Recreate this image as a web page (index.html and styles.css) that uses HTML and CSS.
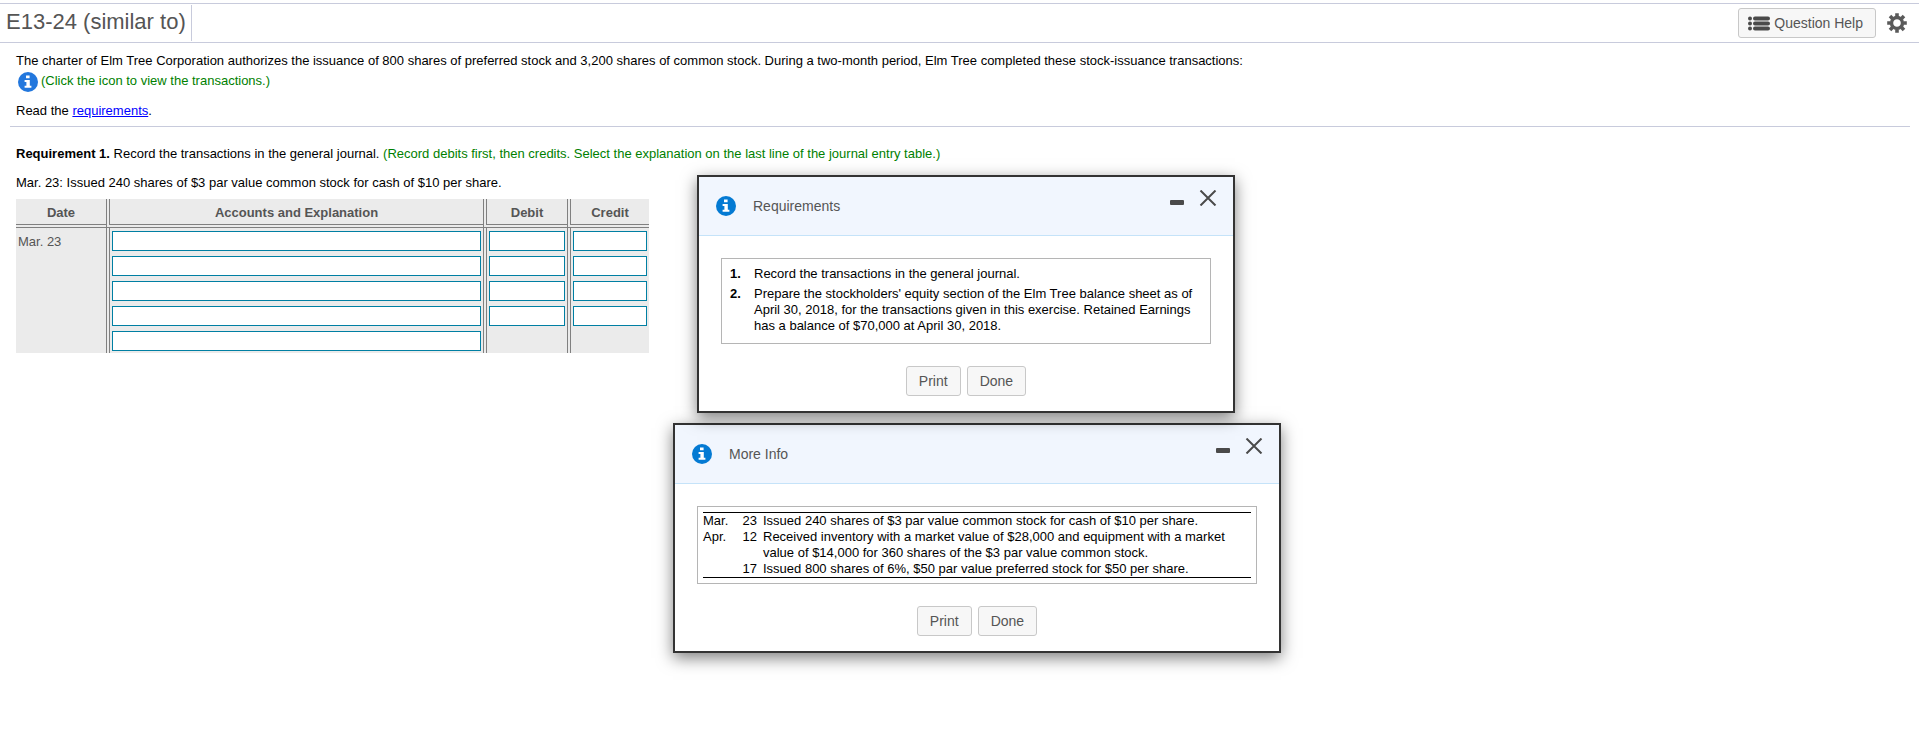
FILE: index.html
```html
<!DOCTYPE html>
<html lang="en">
<head>
    <meta charset="UTF-8">
    <meta name="viewport" content="width=device-width, initial-scale=1.0">
    <title>E13-24 (similar to)</title>
    <link rel="stylesheet" href="styles.css">
</head>
<body>
    <svg class="defs" width="0" height="0" aria-hidden="true">
        <symbol id="info" viewBox="0 0 20 20">
            <circle cx="10" cy="10" r="10" fill="currentColor"/>
            <path fill="#fff" d="M8 3.4h3.6v2.8H8zM6.6 8h5.2v5.8h1.6v2H6.6v-2h1.8V10H6.6z"/>
        </symbol>
        <symbol id="minus" viewBox="0 0 14 5">
            <rect width="14" height="5" rx="1" fill="currentColor"/>
        </symbol>
        <symbol id="close" viewBox="0 0 18 16">
            <path d="M1.5 .5l15 15M16.5 .5l-15 15" stroke="currentColor" stroke-width="2" fill="none"/>
        </symbol>
    </svg>

    <header class="top-bar">
        <h1 class="title">E13-24 (similar to)</h1>
        <div class="tools">
            <button class="btn help" type="button">
                <svg width="22" height="15" viewBox="0 0 22 15" fill="#4a4a4a" aria-hidden="true">
                    <circle cx="2" cy="2.5" r="2"/><circle cx="2" cy="7.5" r="2"/><circle cx="2" cy="12.5" r="2"/>
                    <rect x="5" y=".5" width="17" height="4" rx="2"/><rect x="5" y="5.5" width="17" height="4" rx="2"/><rect x="5" y="10.5" width="17" height="4" rx="2"/>
                </svg>
                Question Help
            </button>
            <button class="icon-btn" type="button" aria-label="Settings">
                <svg width="20" height="20" viewBox="-10 -10 20 20" fill="none" stroke="#5a5a5a">
                    <circle r="5.5" stroke-width="3.4"/>
                    <path stroke-width="3.6" d="M0-6.5V-9.8M0 6.5V9.8M-6.5 0H-9.8M6.5 0H9.8M-4.6-4.6L-7-7M4.6-4.6L7-7M-4.6 4.6L-7 7M4.6 4.6L7 7"/>
                </svg>
            </button>
        </div>
    </header>

    <section class="problem">
        <p>The charter of Elm Tree Corporation authorizes the issuance of 800 shares of preferred stock and 3,200 shares of common stock. During a two-month period, Elm Tree completed these stock-issuance transactions:</p>
        <p class="hint info-line">
            <button class="icon-btn info-btn" type="button" aria-label="View the transactions"><svg width="20" height="20"><use href="#info"/></svg></button>
            (Click the icon to view the transactions.)
        </p>
        <p class="read">Read the <a href="#requirements">requirements</a>.</p>
    </section>

    <main class="answer">
        <p><strong>Requirement 1.</strong> Record the transactions in the general journal. <span class="hint">(Record debits first, then credits. Select the explanation on the last line of the journal entry table.)</span></p>
        <p class="entry">Mar. 23: Issued 240 shares of $3 par value common stock for cash of $10 per share.</p>
        <table class="journal">
            <thead>
                <tr><th class="date">Date</th><th class="gap"></th><th class="account">Accounts and Explanation</th><th class="gap"></th><th class="debit">Debit</th><th class="gap"></th><th class="credit">Credit</th></tr>
                <tr class="rule"><td></td><td class="gap"></td><td></td><td class="gap"></td><td></td><td class="gap"></td><td></td></tr>
            </thead>
            <tbody>
                <tr><td class="day">Mar. 23</td><td class="gap"></td><td><input type="text" aria-label="Account 1"></td><td class="gap"></td><td><input type="text" aria-label="Debit 1"></td><td class="gap"></td><td><input type="text" aria-label="Credit 1"></td></tr>
                <tr><td></td><td class="gap"></td><td><input type="text" aria-label="Account 2"></td><td class="gap"></td><td><input type="text" aria-label="Debit 2"></td><td class="gap"></td><td><input type="text" aria-label="Credit 2"></td></tr>
                <tr><td></td><td class="gap"></td><td><input type="text" aria-label="Account 3"></td><td class="gap"></td><td><input type="text" aria-label="Debit 3"></td><td class="gap"></td><td><input type="text" aria-label="Credit 3"></td></tr>
                <tr><td></td><td class="gap"></td><td><input type="text" aria-label="Account 4"></td><td class="gap"></td><td><input type="text" aria-label="Debit 4"></td><td class="gap"></td><td><input type="text" aria-label="Credit 4"></td></tr>
                <tr><td></td><td class="gap"></td><td><input type="text" aria-label="Explanation"></td><td class="gap"></td><td></td><td class="gap"></td><td></td></tr>
            </tbody>
        </table>
    </main>

    <div class="dialog more-info" role="dialog" aria-labelledby="info-title">
        <div class="dialog-head">
            <svg class="dialog-icon" width="20" height="20" aria-hidden="true"><use href="#info"/></svg>
            <h2 id="info-title">More Info</h2>
            <div class="dialog-tools">
                <button class="icon-btn" type="button" aria-label="Minimize"><svg class="min" width="14" height="5"><use href="#minus"/></svg></button>
                <button class="icon-btn" type="button" aria-label="Close"><svg width="18" height="16"><use href="#close"/></svg></button>
            </div>
        </div>
        <div class="dialog-body">
            <div class="box box-table">
                <table class="transactions">
                    <tr><td class="month">Mar.</td><td class="num">23</td><td>Issued 240 shares of $3 par value common stock for cash of $10 per share.</td></tr>
                    <tr><td>Apr.</td><td class="num">12</td><td>Received inventory with a market value of $28,000 and equipment with a market<br>value of $14,000 for 360 shares of the $3 par value common stock.</td></tr>
                    <tr><td></td><td class="num">17</td><td>Issued 800 shares of 6%, $50 par value preferred stock for $50 per share.</td></tr>
                </table>
            </div>
            <div class="actions">
                <button class="btn" type="button">Print</button>
                <button class="btn" type="button">Done</button>
            </div>
        </div>
    </div>

    <div class="dialog requirements" id="requirements" role="dialog" aria-labelledby="req-title">
        <div class="dialog-head">
            <svg class="dialog-icon" width="20" height="20" aria-hidden="true"><use href="#info"/></svg>
            <h2 id="req-title">Requirements</h2>
            <div class="dialog-tools">
                <button class="icon-btn" type="button" aria-label="Minimize"><svg class="min" width="14" height="5"><use href="#minus"/></svg></button>
                <button class="icon-btn" type="button" aria-label="Close"><svg width="18" height="16"><use href="#close"/></svg></button>
            </div>
        </div>
        <div class="dialog-body">
            <ol class="box box-list">
                <li>Record the transactions in the general journal.</li>
                <li>Prepare the stockholders' equity section of the Elm Tree balance sheet as of April 30, 2018, for the transactions given in this exercise. Retained Earnings has a balance of $70,000 at April 30, 2018.</li>
            </ol>
            <div class="actions">
                <button class="btn" type="button">Print</button>
                <button class="btn" type="button">Done</button>
            </div>
        </div>
    </div>
</body>
</html>
```
FILE: styles.css
```css
* {
    box-sizing: border-box;
}
body {
    margin: 0;
    padding-top: 3px;
    font-family: Arial, "Liberation Sans", sans-serif;
    font-size: 13px;
    line-height: 16px;
    color: #000;
    background-color: #fff;
}
p, h1, h2 {
    margin: 0;
    font-weight: normal;
}
a {
    color: #0000ff;
}
.defs {
    position: absolute;
}

/* top bar */
.top-bar {
    display: flex;
    justify-content: space-between;
    height: 40px;
    padding: 1px 12px 1px 0;
    border-top: 1px solid #c8cbdc;
    border-bottom: 1px solid #c8cbdc;
}
.title {
    padding: 0 5px 0 6px;
    border-right: 1px solid #c8cbdc;
    font-size: 22px;
    line-height: 34px;
    color: #555;
}
.tools {
    display: flex;
    align-items: center;
    gap: 11px;
}
.btn {
    height: 30px;
    padding: 0 12px;
    border: 1px solid #c8c8c8;
    border-radius: 3px;
    background-color: #f7f7f7;
    font-family: inherit;
    font-size: 14px;
    color: #555;
    cursor: pointer;
}
.help {
    display: flex;
    align-items: center;
    gap: 4px;
    padding: 0 12px 0 9px;
}
.icon-btn {
    display: flex;
    padding: 0;
    border: 0;
    background: none;
    color: #4a4a4a;
    cursor: pointer;
}

/* problem text */
.problem {
    margin: 0 9px 0 10px;
    padding: 10px 6px 7px;
    border-bottom: 1px solid #c8cbdc;
}
.hint {
    color: #008000;
}
.info-line {
    display: flex;
    gap: 3px;
    height: 20px;
    margin-top: 3px;
    padding-left: 2px;
    line-height: 18px;
}
.info-btn {
    color: #2277dd;
}
.read {
    margin-top: 11px;
}
.answer {
    padding: 19px 16px 0;
}
.entry {
    margin-top: 13px;
}

/* journal entry table */
.journal {
    margin-top: 8px;
    border-collapse: separate;
    border-spacing: 0;
    background-color: #ebebeb;
    color: #555;
}
.journal th {
    height: 26px;
    padding: 3px 0 0;
    border-bottom: 1px solid #808080;
}
.journal td {
    height: 25px;
    padding: 2px;
    vertical-align: top;
}
.journal .gap {
    width: 4px;
    padding: 0;
    border-left: 1px solid #808080;
    border-right: 1px solid #808080;
    border-bottom: 0;
}
.journal .rule td {
    height: 3px;
    padding: 0;
    border-right: 0;
    border-bottom: 1px solid #808080;
}
.journal .date {
    width: 90px;
}
.journal .account {
    width: 373px;
}
.journal .debit {
    width: 80px;
}
.journal .credit {
    width: 78px;
}
.journal .day {
    padding-top: 6px;
}
.journal input {
    display: block;
    width: 100%;
    height: 20px;
    margin-top: 1px;
    padding: 0 2px;
    border: 1px solid #007fa3;
    background-color: #fff;
}

/* pop-up windows */
.dialog {
    position: absolute;
    border: 2px solid #333;
    background-color: #fff;
    box-shadow: 0 5px 15px rgba(0, 0, 0, 0.5);
}
.requirements {
    left: 697px;
    top: 175px;
    width: 538px;
}
.more-info {
    left: 673px;
    top: 423px;
    width: 608px;
}
.dialog-head {
    display: flex;
    height: 59px;
    padding: 0 16px 0 17px;
    border-bottom: 1px solid #c5e3f9;
    background-color: #f1f6fe;
}
.dialog-head h2 {
    margin-left: 17px;
    font-size: 14px;
    line-height: 58px;
    color: #555;
}
.dialog-icon {
    margin-top: 19px;
    color: #047ad3;
}
.dialog-tools {
    display: flex;
    align-items: flex-start;
    gap: 15px;
    margin-left: auto;
    padding-top: 13px;
}
.min {
    margin-top: 10px;
}
.dialog-body {
    padding: 22px 22px 15px;
}
.box {
    margin: 0;
    border: 1px solid #b5b5b5;
}
.box-list {
    padding: 7px 12px 9px 8px;
    list-style: none;
    counter-reset: item;
}
.box-list li {
    display: grid;
    grid-template-columns: 24px 1fr;
    counter-increment: item;
}
.box-list li::before {
    content: counter(item) ".";
    font-weight: bold;
}
.box-list li + li {
    margin-top: 4px;
}
.box-table {
    padding: 5px;
}
.transactions {
    width: 100%;
    border-collapse: collapse;
    border-top: 1px solid #000;
    border-bottom: 1px solid #000;
}
.transactions td {
    padding: 0;
    vertical-align: top;
}
.transactions .month {
    width: 38px;
}
.transactions .num {
    width: 22px;
    padding-right: 6px;
    text-align: right;
}
.actions {
    display: flex;
    justify-content: center;
    gap: 6px;
    margin-top: 22px;
}
```
